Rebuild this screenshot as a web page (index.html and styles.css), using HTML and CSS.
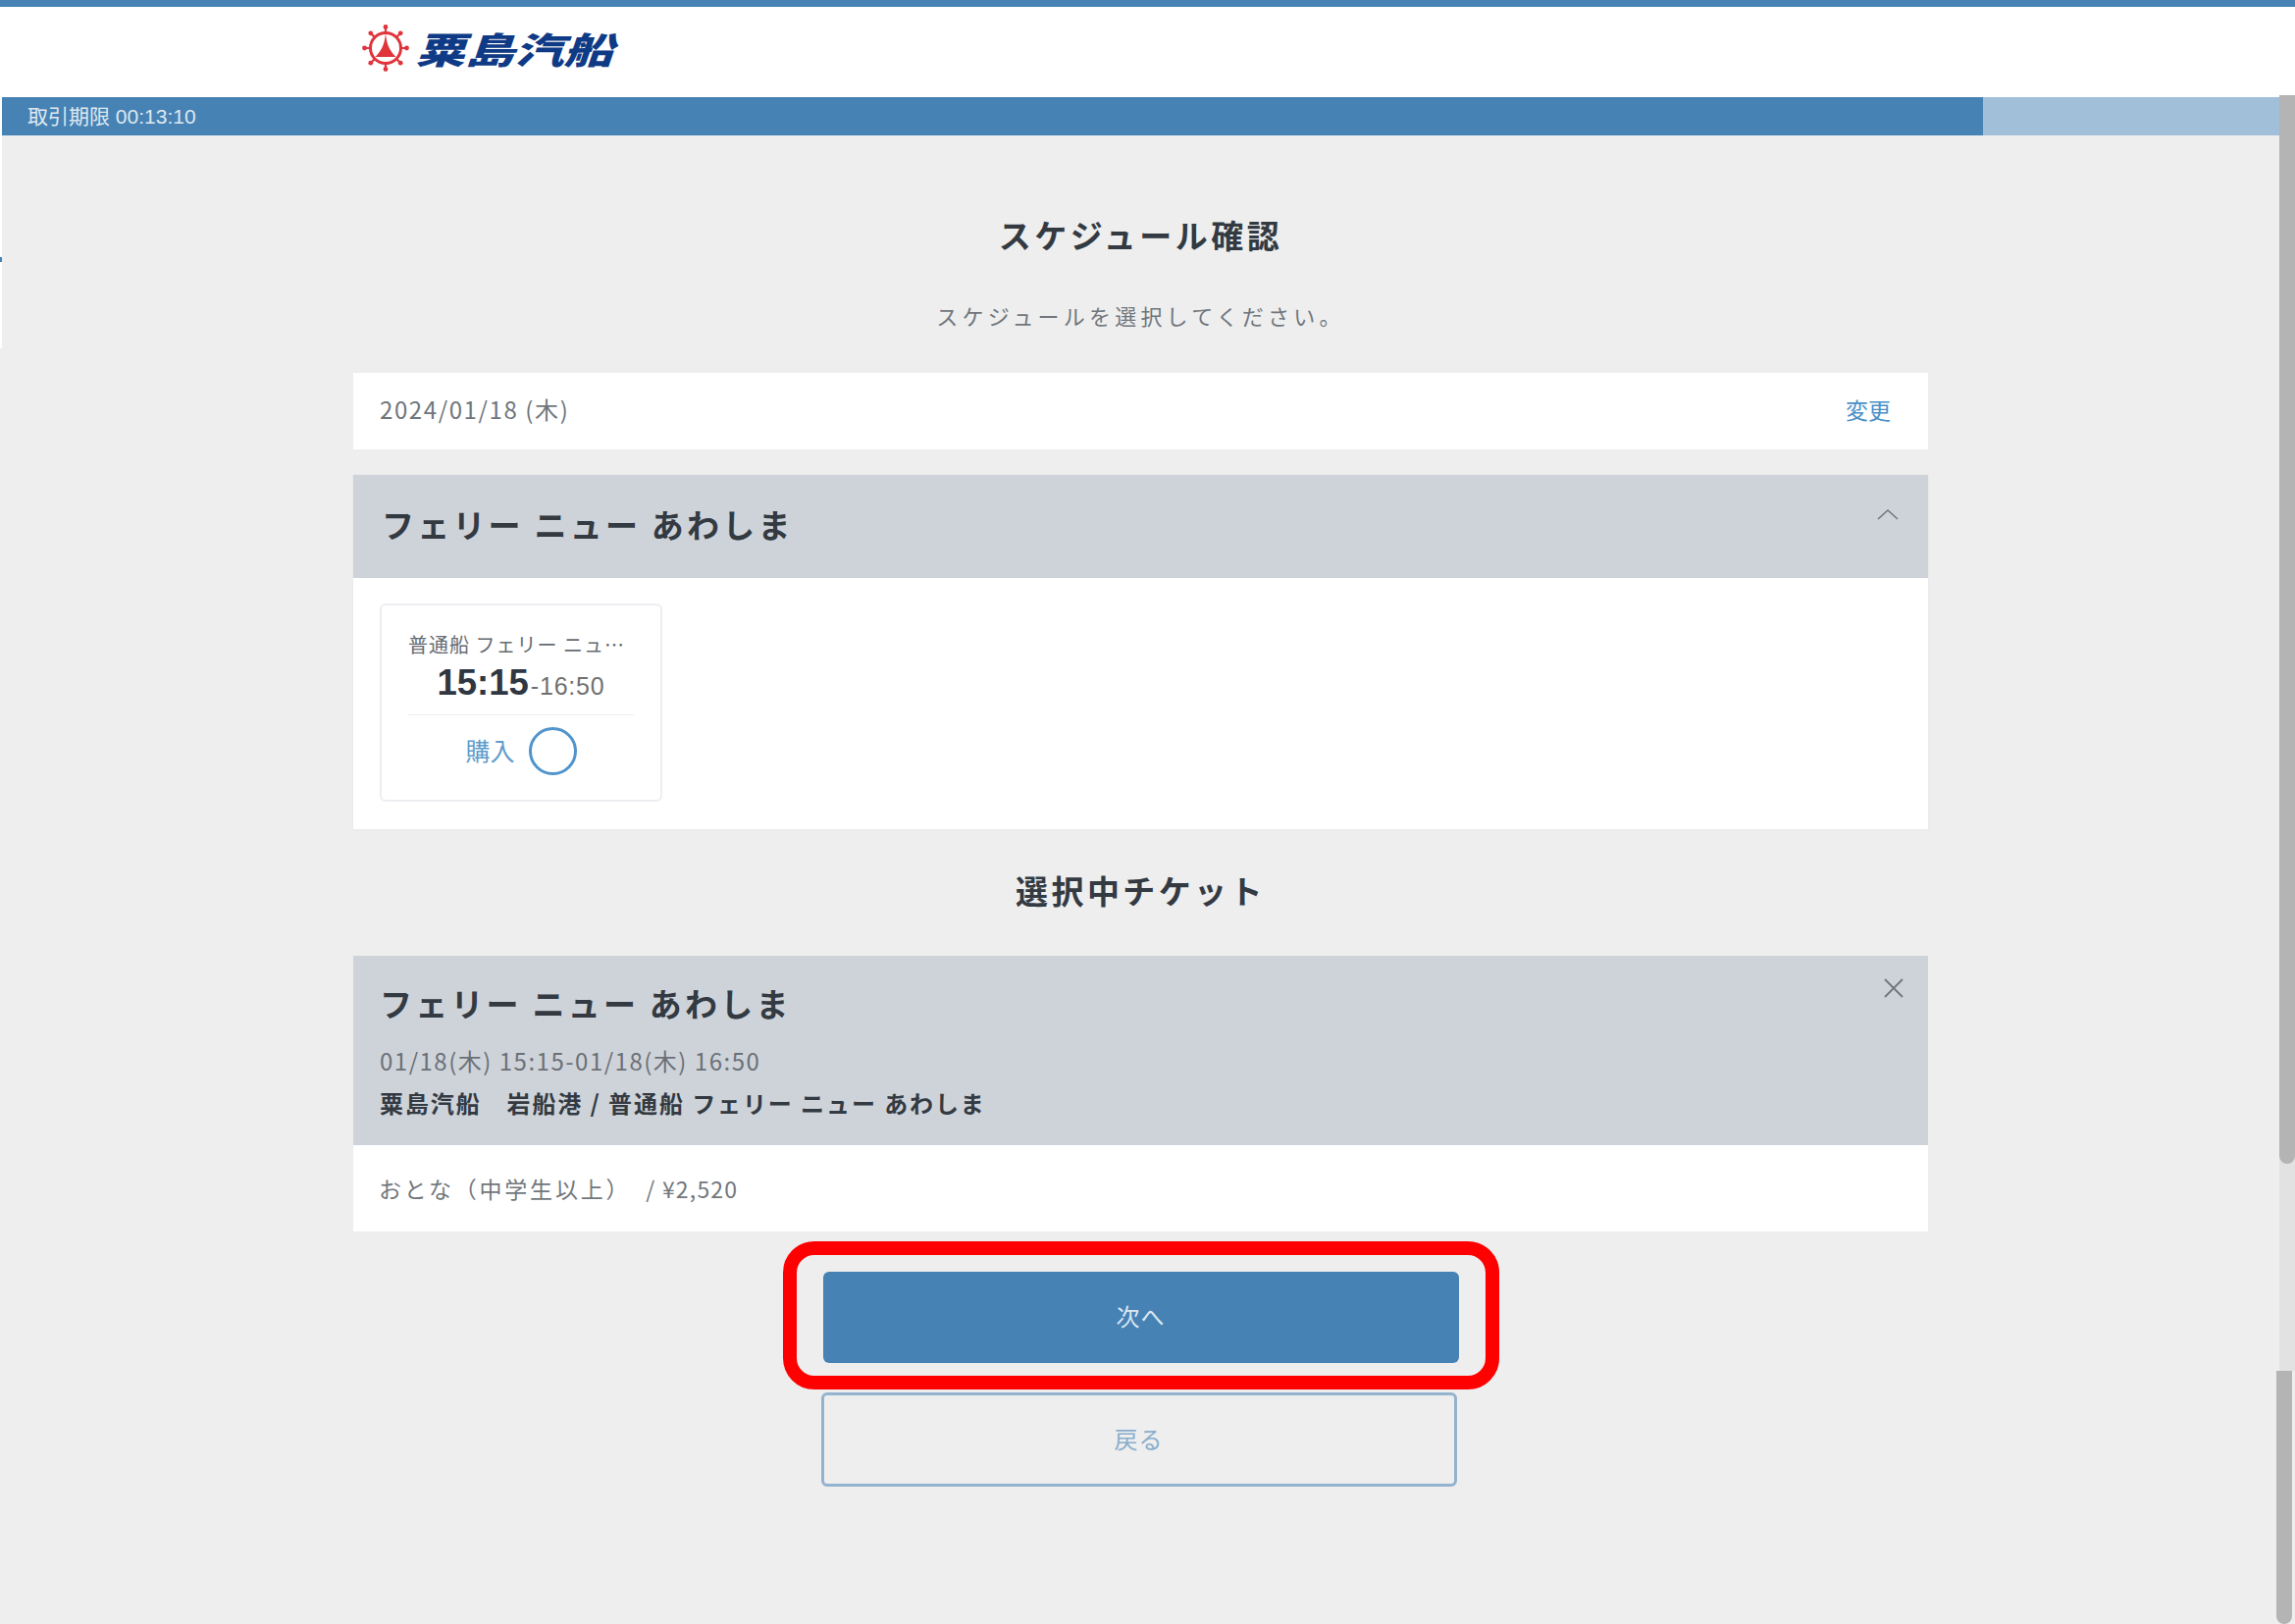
FILE: index.html
```html
<!DOCTYPE html>
<html lang="ja">
<head>
<meta charset="utf-8">
<title>スケジュール確認</title>
<link rel="stylesheet" href="styles.css">
</head>
<body>
<header class="site-header">
  <div class="logo">
    <svg class="logo-mark" width="50" height="50" viewBox="0 0 50 50" aria-hidden="true">
      <g stroke="#e0343c" stroke-width="2.2" fill="none">
        <circle cx="25" cy="25" r="15.5" stroke-width="3"/>
        <path d="M25 2V10M25 40V48M2 25H10M40 25H48M8.7 8.7L14.4 14.4M35.6 35.6L41.3 41.3M41.3 8.7L35.6 14.4M14.4 35.6L8.7 41.3"/>
      </g>
      <g fill="#e0343c">
        <circle cx="25" cy="3.5" r="2.4"/><circle cx="25" cy="46.5" r="2.4"/>
        <circle cx="3.5" cy="25" r="2.4"/><circle cx="46.5" cy="25" r="2.4"/>
        <circle cx="9.8" cy="9.8" r="2.4"/><circle cx="40.2" cy="40.2" r="2.4"/>
        <circle cx="40.2" cy="9.8" r="2.4"/><circle cx="9.8" cy="40.2" r="2.4"/>
        <path d="M25 9C24.4 18 22.5 26 14.5 34H35.5C27.5 26 25.6 18 25 9Z"/>
      </g>
    </svg>
    <span class="logo-text">粟島汽船</span>
  </div>
</header>

<div class="timer-bar">
  <div class="timer-fill"><span class="timer-text">取引期限 00:13:10</span></div>
  <div class="timer-rest"></div>
</div>

<main class="content">
  <h1 class="page-title">スケジュール確認</h1>
  <p class="page-lead">スケジュールを選択してください。</p>

  <section class="date-card">
    <span class="date-text">2024/01/18 (木)</span>
    <a class="change-link">変更</a>
  </section>

  <section class="ship-panel">
    <div class="ship-head">
      <h2 class="ship-name">フェリー ニュー あわしま</h2>
      <svg class="chevron" width="24" height="14" viewBox="0 0 24 14" aria-hidden="true"><path d="M2 12L12 3L22 12" fill="none" stroke="#6f7680" stroke-width="1.6"/></svg>
    </div>
    <div class="ship-body">
      <article class="trip-card">
        <div class="trip-name">普通船 フェリー ニュ…</div>
        <div class="trip-time"><strong class="trip-depart">15:15</strong><span class="trip-arrive">-16:50</span></div>
        <div class="trip-buy">
          <span class="buy-label">購入</span>
          <span class="buy-radio"></span>
        </div>
      </article>
    </div>
  </section>

  <h2 class="section-title">選択中チケット</h2>

  <section class="ticket">
    <div class="ticket-head">
      <h3 class="ticket-name">フェリー ニュー あわしま</h3>
      <div class="ticket-when">01/18(木) 15:15-01/18(木) 16:50</div>
      <div class="ticket-route">粟島汽船　岩船港 / 普通船 フェリー ニュー あわしま</div>
      <svg class="close" width="24" height="24" viewBox="0 0 24 24" aria-hidden="true"><path d="M3 3L21 21M21 3L3 21" fill="none" stroke="#6f7680" stroke-width="1.8"/></svg>
    </div>
    <div class="ticket-body">おとな（中学生以上）<span class="ticket-price">/ ¥2,520</span></div>
  </section>

  <div class="actions">
    <a class="btn btn-primary">次へ</a>
    <a class="btn btn-secondary">戻る</a>
    <div class="highlight"></div>
  </div>
</main>

<div class="left-edge"></div>
<div class="left-tick"></div>
<div class="scroll-track"></div>
<div class="scroll-thumb"></div>
<div class="scroll-thumb-lower"></div>
</body>
</html>
```
FILE: styles.css
```css
* { box-sizing: border-box; }

html, body {
  margin: 0;
  height: 1655px;
  overflow: hidden;
}

body {
  position: relative;
  background: #eeeeee;
  color: #333a42;
  font-family: "Noto Sans CJK JP", "Noto Sans", sans-serif;
}

h1, h2, h3, p { margin: 0; }

.site-header {
  height: 99px;
  background: #fff;
  border-top: 7px solid #4682b4;
  padding: 17px 0 0 368px;
}

.logo {
  display: flex;
  align-items: center;
  gap: 11px;
  height: 50px;
}

.logo-text {
  display: inline-block;
  color: #0f3b86;
  font-size: 37px;
  font-weight: 900;
  line-height: 50px;
  transform: scaleX(1.36) skewX(-14deg);
  transform-origin: left center;
}

.timer-bar {
  display: flex;
  height: 39px;
  padding-right: 16px;
}

.timer-fill {
  display: flex;
  align-items: center;
  width: 2021px;
  padding: 0 0 4px 28px;
  background: #4682b4;
}

.timer-text {
  color: #dfe8f0;
  font-family: "Liberation Sans", "Noto Sans CJK JP", sans-serif;
  font-size: 21px;
}

.timer-rest {
  flex: 1;
  background: #a2bfda;
}

.content {
  display: flex;
  flex-direction: column;
  align-items: center;
  width: 2325px;
}

.page-title {
  margin-top: 77px;
  font-size: 33px;
  font-weight: 700;
  line-height: 48px;
  letter-spacing: 3.5px;
}

.page-lead {
  margin-top: 42px;
  color: #70767c;
  font-size: 22px;
  font-weight: 400;
  line-height: 32px;
  letter-spacing: 4.2px;
}

.date-card {
  display: flex;
  justify-content: space-between;
  align-items: center;
  width: 1605px;
  height: 78px;
  margin-top: 43px;
  padding: 0 38px 5px 27px;
  background: #fff;
}

.date-text {
  color: #70767c;
  font-size: 24px;
  letter-spacing: 1.6px;
}

.change-link {
  color: #4a90c8;
  font-size: 23px;
}

.ship-panel {
  width: 1605px;
  height: 361px;
  margin-top: 26px;
  background: #fff;
  box-shadow: 0 0 2px #e3e3e3;
}

.ship-head {
  position: relative;
  height: 105px;
  padding: 26px 29px 0;
  background: #ced3da;
}

.ship-name, .ticket-name {
  color: #333a42;
  font-size: 33px;
  font-weight: 700;
  line-height: 48px;
  letter-spacing: 3.2px;
}

.chevron {
  position: absolute;
  top: 33px;
  right: 29px;
}

.ship-body {
  padding: 26px 27px 0;
}

.trip-card {
  width: 288px;
  height: 202px;
  padding: 26px 27px 0;
  background: #fff;
  border: 2px solid #eceef1;
  border-radius: 6px;
}

.trip-name {
  color: #666c72;
  font-size: 20px;
  line-height: 28px;
  letter-spacing: 1px;
  white-space: nowrap;
}

.trip-time {
  height: 58px;
  text-align: center;
  color: #707070;
  font-family: "Liberation Sans", sans-serif;
  line-height: 50px;
  border-bottom: 1px solid #eceef1;
}

.trip-depart {
  color: #2f3742;
  font-size: 36.5px;
  font-weight: 700;
}

.trip-arrive {
  margin-left: 2px;
  font-size: 25px;
  letter-spacing: 0.8px;
}

.trip-buy {
  display: flex;
  justify-content: center;
  align-items: center;
  gap: 14px;
  padding-top: 12px;
}

.buy-label {
  margin-bottom: 4px;
  color: #5f9ccb;
  font-size: 25px;
  line-height: 32px;
}

.buy-radio {
  width: 49px;
  height: 49px;
  background: #fff;
  border: 3px solid #4f94cc;
  border-radius: 50%;
}

.section-title {
  margin-top: 38px;
  color: #333a42;
  font-size: 33px;
  font-weight: 700;
  line-height: 48px;
  letter-spacing: 3.4px;
}

.ticket {
  width: 1605px;
  margin-top: 43px;
  background: #fff;
}

.ticket-head {
  position: relative;
  height: 193px;
  padding: 24px 27px 0;
  background: #ced3da;
}

.ticket-when {
  margin-top: 18px;
  color: #6b7076;
  font-size: 24px;
  line-height: 34px;
  letter-spacing: 1.5px;
}

.ticket-route {
  margin-top: 9px;
  color: #333a42;
  font-size: 24px;
  font-weight: 700;
  line-height: 34px;
  letter-spacing: 1.9px;
}

.close {
  position: absolute;
  top: 21px;
  right: 23px;
}

.ticket-body {
  height: 88px;
  padding-left: 26px;
  color: #72777c;
  font-size: 23px;
  line-height: 88px;
  letter-spacing: 2.8px;
}

.ticket-price {
  margin-left: 15px;
  letter-spacing: 1.2px;
}

.actions {
  position: relative;
  display: flex;
  flex-direction: column;
  align-items: center;
  gap: 30px;
  margin-top: 41px;
}

.btn {
  display: flex;
  justify-content: center;
  align-items: center;
  width: 648px;
  height: 93px;
  padding-bottom: 4px;
  font-size: 24px;
  letter-spacing: 1px;
  border-radius: 6px;
}

.btn-primary {
  color: #dce7f1;
  background: #4682b4;
}

.btn-secondary {
  position: relative;
  left: -2px;
  height: 96px;
  color: #8aaecd;
  border: 3px solid #94b3cf;
}

.highlight {
  position: absolute;
  top: -31px;
  left: -41px;
  width: 730px;
  height: 151px;
  border: 14px solid #ff0000;
  border-radius: 32px;
}

.left-edge {
  position: absolute;
  top: 99px;
  left: 0;
  width: 2px;
  height: 256px;
  background: #fff;
}

.left-tick {
  position: absolute;
  top: 262px;
  left: 0;
  width: 2px;
  height: 5px;
  background: #4682b4;
}

.scroll-track {
  position: absolute;
  top: 1180px;
  left: 2323px;
  width: 16px;
  height: 217px;
  background: #e2e2e2;
}

.scroll-thumb {
  position: absolute;
  top: 97px;
  left: 2323px;
  width: 16px;
  height: 1089px;
  background: #b4b4b4;
  border-radius: 0 0 8px 8px;
}

.scroll-thumb-lower {
  position: absolute;
  top: 1397px;
  left: 2320px;
  width: 16px;
  height: 258px;
  background: #b4b4b4;
  border-radius: 0 0 8px 8px;
}
```
